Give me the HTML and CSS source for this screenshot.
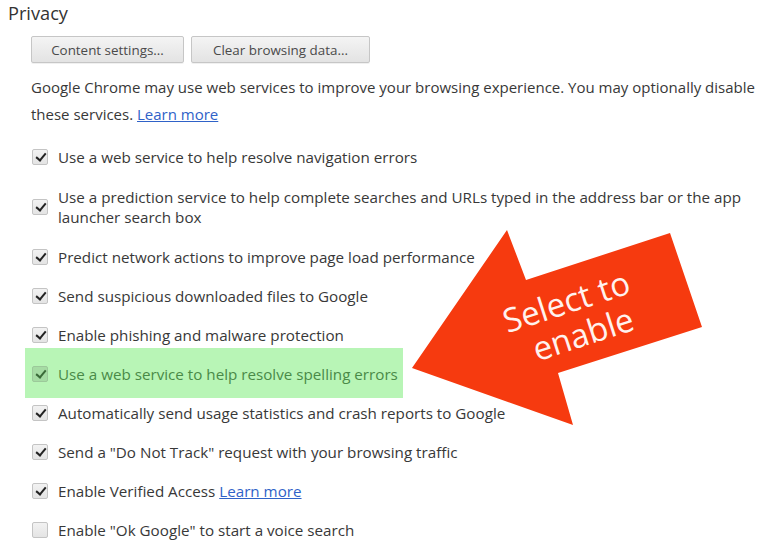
FILE: index.html
```html
<!DOCTYPE html>
<html lang="en">
<head>
  <meta charset="UTF-8">
  <title>Privacy settings</title>
  <link rel="stylesheet" href="styles.css">
</head>
<body>

  <!-- Privacy section -->
  <div class="privacy">
    <h3 class="section-title">Privacy</h3>

    <div class="section-body">
      <div class="btn-row">
        <button class="btn btn-content">Content settings...</button>
        <button class="btn btn-clear">Clear browsing data...</button>
      </div>

      <p class="intro">Google Chrome may use web services to improve your browsing experience. You may optionally disable these services. <a href="#">Learn more</a></p>

      <ul class="options">
        <li class="option"><span class="check on"></span><span>Use a web service to help resolve navigation errors</span></li>
        <li class="option two-line"><span class="check on"></span><span>Use a prediction service to help complete searches and URLs typed in the address bar or the app launcher search box</span></li>
        <li class="option"><span class="check on"></span><span>Predict network actions to improve page load performance</span></li>
        <li class="option"><span class="check on"></span><span>Send suspicious downloaded files to Google</span></li>
        <li class="option"><span class="check on"></span><span>Enable phishing and malware protection</span></li>
        <li class="option highlight"><span class="check on"></span><span>Use a web service to help resolve spelling errors</span></li>
        <li class="option"><span class="check on"></span><span>Automatically send usage statistics and crash reports to Google</span></li>
        <li class="option"><span class="check on"></span><span>Send a "Do Not Track" request with your browsing traffic</span></li>
        <li class="option"><span class="check on"></span><span>Enable Verified Access <a href="#">Learn more</a></span></li>
        <li class="option"><span class="check"></span><span>Enable "Ok Google" to start a voice search</span></li>
      </ul>
    </div>
  </div>

  <!-- Callout arrow drawn over the list -->
  <svg class="callout" width="764" height="541" viewBox="0 0 764 541">
    <polygon points="412,368 507,230 526,280 670,233 702,327 558,373 573,425" fill="#f63a0f"/>
    <g transform="rotate(-18 578 325)">
      <text x="574" y="311" class="callout-text">Select to</text>
      <text x="580" y="347" class="callout-text">enable</text>
    </g>
  </svg>

</body>
</html>
```

FILE: styles.css
```css
/* General */
body {
  margin: 0;
  padding: 0;
  background-color: #ffffff;
  color: #383838;
  font-family: 'Open Sans', 'Noto Sans', sans-serif;
  font-size: 15.2px;
  position: relative;
  overflow: hidden;
  height: 541px;
}

a {
  color: #2f62c8;
  text-decoration: underline;
}

/* Section */
.section-title {
  margin: 0;
  padding: 2px 0 0 8px;
  font-size: 18.2px;
  font-weight: 400;
  line-height: 22px;
  color: #333;
}

.section-body {
  padding-left: 31px;
}

.btn-row {
  display: flex;
  gap: 7px;
  margin-top: 12px;
}

.btn {
  height: 27px;
  padding: 0;
  font-family: inherit;
  font-size: 13.4px;
  color: #4a4a4a;
  background: linear-gradient(#f4f4f4, #e3e3e3);
  border: 1px solid #c6c6c6;
  border-radius: 2px;
  box-shadow: 0 1px 0 rgba(0, 0, 0, 0.06);
}

.btn-content {
  width: 153px;
}

.btn-clear {
  width: 179px;
}

.intro {
  margin: 11px 0 0;
  font-size: 15px;
  line-height: 27px;
}

/* Checkbox list */
.options {
  list-style: none;
  margin: 18.5px 0 0;
  padding: 0;
  display: flex;
  flex-direction: column;
  gap: 19px;
}

.option {
  display: flex;
  align-items: center;
  gap: 10px;
  line-height: 20px;
  padding-right: 20px;
}

.option.two-line {
  margin: 1px 0;
}

.check {
  flex: none;
  width: 14px;
  height: 14px;
  border: 1px solid #c4c4c4;
  border-radius: 2px;
  background: linear-gradient(#f2f2f2, #e4e4e4);
  position: relative;
  margin-left: 1px;
}

.check.on::after {
  content: "";
  position: absolute;
  left: 5px;
  top: 1px;
  width: 4px;
  height: 8px;
  border: solid #222;
  border-width: 0 2.5px 2.5px 0;
  transform: rotate(40deg);
}

.option.highlight {
  background-color: #b8f5b6;
  color: #4a8a48;
  margin: -16px 0 -14px -6px;
  padding: 16px 0 14px 6px;
  width: 372px;
}

.option.highlight .check {
  background: #a6dca4;
  border-color: #9cc99a;
}

.option.highlight .check.on::after {
  border-color: #3a6a38;
}

/* Callout */
.callout {
  position: absolute;
  left: 0;
  top: 0;
  pointer-events: none;
}

.callout-text {
  font-family: 'Open Sans', 'Noto Sans', sans-serif;
  font-size: 33px;
  fill: #fff2ee;
  text-anchor: middle;
}
```
